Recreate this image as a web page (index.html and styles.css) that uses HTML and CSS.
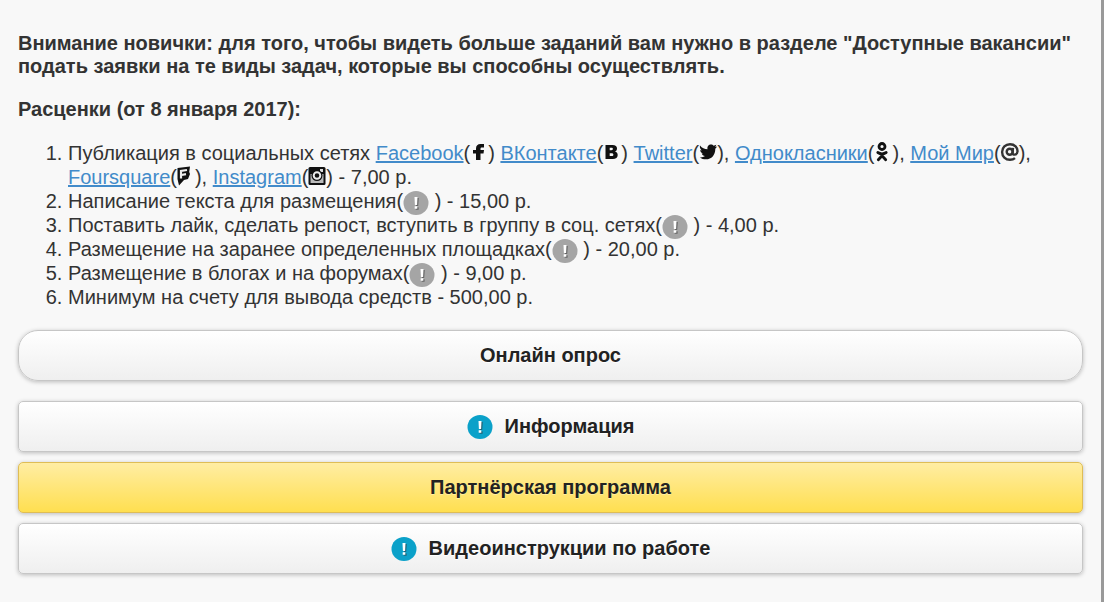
FILE: index.html
```html
<!DOCTYPE html>
<html lang="ru">
<head>
  <meta charset="UTF-8" />
  <meta name="viewport" content="width=device-width, initial-scale=1.0" />
  <title>Расценки</title>
  <link rel="stylesheet" href="styles.css">
</head>
<body>
  <svg width="0" height="0" class="sprite" aria-hidden="true">
    <symbol id="mark" viewBox="0 0 26 26">
      <ellipse cx="13" cy="13" rx="12.500" ry="12" fill="currentColor" />
      <path d="M12.500 8h3.300l-.6 8h-2.200zM12.700 17.300h2.900v2.500h-2.900z" fill="#333" opacity=".55" />
      <path d="M11.500 7h3l-.4 8h-2.200zM11.700 16.300h2.600v2.500h-2.600z" fill="#fff" />
    </symbol>
  </svg>
  <main>
    <p class="notice">Внимание новички: для того, чтобы видеть больше заданий вам нужно в разделе "Доступные вакансии" подать заявки на те виды задач, которые вы способны осуществлять.</p>
    <p class="notice">Расценки (от 8 января 2017):</p>
    <ol class="prices">
      <li>Публикация в социальных сетях
        <a href="#">Facebook</a>(<svg class="icon" viewBox="1 1 18 18"><path d="M7 18V11.500H4V8h3V6.500C7 3.500 8.700 2 11.500 2H15v3.500h-2c-1 0-1.500.4-1.500 1.200V8H15l-.5 3.500h-3V18z" /></svg>)
        <a href="#">ВКонтакте</a>(<svg class="icon" viewBox="1 1 18 18"><path fill-rule="evenodd" d="M3.500 3H10.500c3 0 4.500 1.300 4.500 3.500 0 1.500-.7 2.500-2 3 1.700.4 2.700 1.600 2.700 3.400C15.700 15.600 13.900 17 10.800 17H3.500zM7.700 5.800v2.400h1.700c1 0 1.500-.4 1.500-1.200s-.5-1.200-1.500-1.200zM7.700 11.200v2.900h2c1.200 0 1.700-.5 1.700-1.400s-.6-1.500-1.800-1.500z" /></svg>)
        <a href="#">Twitter</a>(<svg class="icon" viewBox="1 1 18 18"><path d="M2 3.500C4 6 6.500 7.200 9.500 7.300 9 4.500 10.700 2.600 13 2.600c1.100 0 2 .5 2.700 1.200l2.600-1-1 2.100 1.900-.4-1.900 2.200C17.400 13 13.500 17.300 8 17.300c-2.400 0-4.500-.7-6.200-1.900 2 .2 3.800-.3 5.200-1.400-1.700-.1-2.800-1.100-3.300-2.500h1.500C3.300 11 2.300 9.700 2.200 8l1.600.4C2.100 7.100 1.500 5.200 2 3.500z" /></svg>),
        <a href="#">Однокласники</a>(<svg class="icon" viewBox="1 1 18 18"><g fill="none" stroke="currentColor" stroke-width="2.800" stroke-linecap="round" stroke-linejoin="round"><circle cx="9" cy="4.500" r="3" /><path d="M4.800 10.500c2.700 1.800 5.700 1.800 8.400 0M5.300 17.700L9 13.700l3.700 4M9 12v1.500" /></g></svg>),
        <a href="#">Мой Мир</a>(<svg class="icon" viewBox="1 1 18 18"><g fill="none" stroke="#333" stroke-width="2.400"><circle cx="9.700" cy="9.700" r="3" /><path d="M13 5.800l-.5 5.200c0 2.500 4.700 2.300 5-1.500.3-4.200-3-7.300-7.500-7.300-4.500 0-7.900 3.300-7.900 7.800s3.400 7.800 7.900 7.800c2.200 0 3.800-.6 5-1.600" /></g></svg>),
        <a href="#">Foursquare</a>(<svg class="icon" viewBox="1 1 18 18"><path d="M1.500 2l12.500-1.500-.8 5.500.8 2-2 5-4 1L3 19.500 1.500 13z" /><path d="M5 12.500V5l6-1M5.500 9l4.500-.8" fill="none" stroke="#eee" stroke-width="2.200" /></svg>),
        <a href="#">Instagram</a>(<svg class="icon" viewBox="1 1 18 18"><rect x="1.500" y="1" width="17" height="18" rx="1.500" /><rect x="3.500" y="8" width="13" height="9" fill="#bbb" /><rect x="13" y="3" width="3" height="3" fill="#ddd" /><circle cx="10" cy="9.500" r="5.500" /><circle cx="10" cy="9.500" r="3.300" fill="none" stroke="#eee" stroke-width="2" /></svg>) - 7,00 р.</li>
      <li>Написание текста для размещения(<svg class="mark"><use href="#mark" /></svg> ) - 15,00 р.</li>
      <li>Поставить лайк, сделать репост, вступить в группу в соц. сетях(<svg class="mark"><use href="#mark" /></svg> ) - 4,00 р.</li>
      <li>Размещение на заранее определенных площадках(<svg class="mark"><use href="#mark" /></svg> ) - 20,00 р.</li>
      <li>Размещение в блогах и на форумах(<svg class="mark"><use href="#mark" /></svg> ) - 9,00 р.</li>
      <li>Минимум на счету для вывода средств - 500,00 р.</li>
    </ol>
    <div class="actions">
      <button type="button" class="btn btn-round">Онлайн опрос</button>
      <button type="button" class="btn"><svg class="mark"><use href="#mark" /></svg>Информация</button>
      <button type="button" class="btn btn-yellow">Партнёрская программа</button>
      <button type="button" class="btn"><svg class="mark"><use href="#mark" /></svg>Видеоинструкции по работе</button>
    </div>
  </main>
</body>
</html>
```
FILE: styles.css
```css
* {
  box-sizing: border-box;
}
body {
  margin: 0;
  min-height: 100vh;
  font-family: "Liberation Sans", Arial, sans-serif;
  font-size: 20px;
  color: #333;
  background: #f8f8f8;
  border-right: 3px solid #999;
}
.sprite {
  position: absolute;
}
main {
  padding: 32px 18px 28px;
}
.notice {
  margin: 0 0 20px;
  font-weight: bold;
  line-height: 23px;
}
.prices {
  margin: 0 0 21px;
  padding-left: 50px;
  line-height: 24px;
}
.prices a {
  color: #428bca;
  text-decoration: underline;
}
.icon {
  width: 18px;
  height: 18px;
  margin: -4px 0;
  vertical-align: 3px;
  overflow: visible;
  color: #111;
  fill: currentColor;
}
.mark {
  width: 26px;
  height: 26px;
  margin: -6px 0;
  vertical-align: -2px;
  color: #a5a5a5;
}
.actions {
  display: flex;
  flex-direction: column;
  gap: 10px;
}
.btn {
  display: flex;
  align-items: center;
  justify-content: center;
  gap: 12px;
  width: 100%;
  min-height: 51px;
  border: 1px solid #c6c6c6;
  border-radius: 5px;
  background: linear-gradient(#fff, #efefef);
  box-shadow: 0 1px 4px rgba(0, 0, 0, 0.25);
  font: bold 20px "Liberation Sans", Arial, sans-serif;
  color: #222;
  text-shadow: 0 1px 0 #fff;
  cursor: pointer;
}
.btn .mark {
  color: #0ba1c9;
}
.btn-round {
  margin-bottom: 10px;
  border-radius: 20px;
}
.btn-yellow {
  border-color: #dfbd55;
  background: linear-gradient(#ffeda3, #ffdf50);
  text-shadow: 0 1px 0 #ffef9f;
}
```
